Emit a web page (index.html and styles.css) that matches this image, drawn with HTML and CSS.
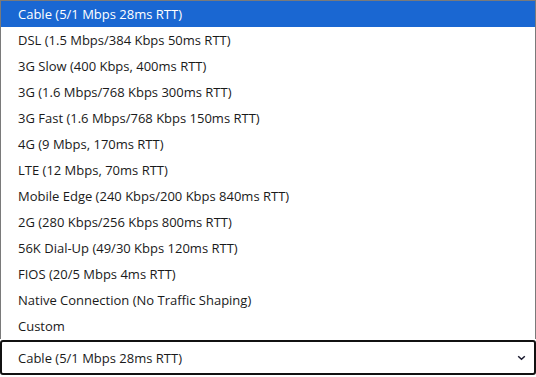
FILE: index.html
```html
<!DOCTYPE html>
<html>
<head>
<meta charset="utf-8">
<link rel="stylesheet" href="styles.css">
</head>
<body>
<div class="page">
  <ul class="list">
    <li class="item selected">Cable (5/1 Mbps 28ms RTT)</li>
    <li class="item">DSL (1.5 Mbps/384 Kbps 50ms RTT)</li>
    <li class="item">3G Slow (400 Kbps, 400ms RTT)</li>
    <li class="item">3G (1.6 Mbps/768 Kbps 300ms RTT)</li>
    <li class="item">3G Fast (1.6 Mbps/768 Kbps 150ms RTT)</li>
    <li class="item">4G (9 Mbps, 170ms RTT)</li>
    <li class="item">LTE (12 Mbps, 70ms RTT)</li>
    <li class="item">Mobile Edge (240 Kbps/200 Kbps 840ms RTT)</li>
    <li class="item">2G (280 Kbps/256 Kbps 800ms RTT)</li>
    <li class="item">56K Dial-Up (49/30 Kbps 120ms RTT)</li>
    <li class="item">FIOS (20/5 Mbps 4ms RTT)</li>
    <li class="item">Native Connection (No Traffic Shaping)</li>
    <li class="item">Custom</li>
  </ul>
  <div class="select">
    <span class="value">Cable (5/1 Mbps 28ms RTT)</span>
    <svg class="chev" width="9" height="6" viewBox="0 0 9 6"><path d="M1.2 1.3 L4.5 4.3 L7.8 1.3" fill="none" stroke="#1a1a2e" stroke-width="1.5"/></svg>
  </div>
</div>
</body>
</html>
```
FILE: styles.css
```css
html, body {
  margin: 0;
  padding: 0;
  background: #ffffff;
}
.page {
  width: 536px;
  height: 377px;
  display: flex;
  flex-direction: column;
  font-family: "Open Sans", "Noto Sans", sans-serif;
  font-size: 13px;
  color: #1a1a1a;
}
.list {
  list-style: none;
  margin: 0;
  padding: 0;
  border: 1px solid #7a7a7a;
  border-bottom: none;
}
.item {
  height: 26px;
  line-height: 26px;
  padding-left: 17px;
  white-space: nowrap;
}
.selected {
  background: #1a67d2;
  color: #ffffff;
}
.select {
  margin-top: 1px;
  height: 31px;
  border: 2px solid #111111;
  border-radius: 3px;
  display: flex;
  align-items: center;
  justify-content: space-between;
  padding: 0 8px 0 16px;
}
.chev {
  display: block;
}
```
